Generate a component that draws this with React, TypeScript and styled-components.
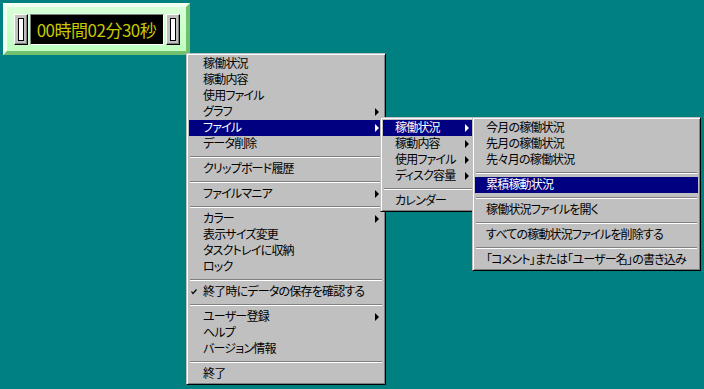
import React from "react";
import styled, { createGlobalStyle } from "styled-components";

type Entry =
	| { sep: true }
	| { label: string; sub?: boolean; active?: boolean; checked?: boolean };

const mainItems: Entry[] = [
	{ label: "稼働状況" },
	{ label: "稼動内容" },
	{ label: "使用ファイル" },
	{ label: "グラフ", sub: true },
	{ label: "ファイル", sub: true, active: true },
	{ label: "データ削除" },
	{ sep: true },
	{ label: "クリップボード履歴" },
	{ sep: true },
	{ label: "ファイルマニア", sub: true },
	{ sep: true },
	{ label: "カラー", sub: true },
	{ label: "表示サイズ変更" },
	{ label: "タスクトレイに収納" },
	{ label: "ロック" },
	{ sep: true },
	{ label: "終了時にデータの保存を確認する", checked: true },
	{ sep: true },
	{ label: "ユーザー登録", sub: true },
	{ label: "ヘルプ" },
	{ label: "バージョン情報" },
	{ sep: true },
	{ label: "終了" },
];

const fileItems: Entry[] = [
	{ label: "稼働状況", sub: true, active: true },
	{ label: "稼動内容", sub: true },
	{ label: "使用ファイル", sub: true },
	{ label: "ディスク容量", sub: true },
	{ sep: true },
	{ label: "カレンダー" },
];

const statusItems: Entry[] = [
	{ label: "今月の稼働状況" },
	{ label: "先月の稼働状況" },
	{ label: "先々月の稼働状況" },
	{ sep: true },
	{ label: "累積稼動状況", active: true },
	{ sep: true },
	{ label: "稼働状況ファイルを開く" },
	{ sep: true },
	{ label: "すべての稼動状況ファイルを削除する" },
	{ sep: true },
	{ label: "「コメント」または「ユーザー名」の書き込み" },
];

const Menu: React.FC<{
	items: Entry[];
	left: number;
	top: number;
	width: number;
	indent: number;
}> = ({ items, left, top, width, indent }) => (
	<MenuBox $left={left} $top={top} $width={width}>
		{items.map((it, i) =>
			"sep" in it ? (
				<Separator key={i} />
			) : (
				<Item key={i} $active={!!it.active} $indent={indent}>
					{it.checked && (
						<Check viewBox="0 0 6 6">
							<polyline
								points="0.5,2.5 2,4.5 5.5,0.5"
								fill="none"
								stroke="currentColor"
								strokeWidth="1.2"
							/>
						</Check>
					)}
					<span>{it.label}</span>
					{it.sub && <Arrow $active={!!it.active} />}
				</Item>
			)
		)}
	</MenuBox>
);

const App: React.FC = () => {
	return (
		<>
			<GlobalStyle />
			<Desktop>
				<Timer>
					<Knob>
						<Slot />
					</Knob>
					<Display>00時間02分30秒</Display>
					<Knob>
						<Slot />
					</Knob>
				</Timer>
				<Menu items={mainItems} left={186} top={53} width={200} indent={14} />
				<Menu items={fileItems} left={380} top={117} width={96} indent={12} />
				<Menu items={statusItems} left={472} top={117} width={229} indent={11} />
			</Desktop>
		</>
	);
};

export default App;

const GlobalStyle = createGlobalStyle`
	html, body {
		margin: 0;
		padding: 0;
		background: #008080;
		overflow: hidden;
	}
`;

const Desktop = styled.div`
	position: relative;
	width: 704px;
	height: 389px;
	background: #008080;
	padding: 3px 0 0 3px;
	box-sizing: border-box;
	font-family: "Noto Sans CJK JP", "DejaVu Sans", sans-serif;
	font-feature-settings: "palt";
`;

const Timer = styled.div`
	width: 187px;
	height: 52px;
	box-sizing: border-box;
	display: flex;
	align-items: center;
	justify-content: center;
	gap: 2px;
	background: linear-gradient(#d8ffd8, #c0ffc0);
	border: 4px solid;
	border-color: #f0fff0 #70c070 #70c070 #f0fff0;
`;

const Knob = styled.div`
	width: 14px;
	height: 31px;
	box-sizing: border-box;
	background: #c0c0c0;
	border: 1px solid;
	border-color: #fff #000 #000 #fff;
	box-shadow: inset -1px -1px #808080;
	display: flex;
	align-items: center;
	justify-content: center;
`;

const Slot = styled.div`
	width: 4px;
	height: 21px;
	background: #fff;
	border: 1px solid #000;
`;

const Display = styled.div`
	width: 134px;
	height: 31px;
	box-sizing: border-box;
	background: #000;
	border: 1px solid;
	border-color: #808080 #fff #fff #808080;
	color: #c8c800;
	font-size: 17px;
	line-height: 29px;
	text-align: center;
	white-space: nowrap;
	font-feature-settings: normal;
	letter-spacing: -0.5px;
`;

const MenuBox = styled.div<{ $left: number; $top: number; $width: number }>`
	position: absolute;
	left: ${(p) => p.$left}px;
	top: ${(p) => p.$top}px;
	width: ${(p) => p.$width}px;
	box-sizing: border-box;
	background: #c0c0c0;
	border: 1px solid;
	border-color: #c0c0c0 #000 #000 #c0c0c0;
	box-shadow: inset 1px 1px #fff, inset -1px -1px #808080;
	padding: 2px;
	font-size: 12px;
	letter-spacing: -0.8px;
	color: #000;
`;

const Item = styled.div<{ $active: boolean; $indent: number }>`
	position: relative;
	height: 16px;
	line-height: 14px;
	padding-left: ${(p) => p.$indent}px;
	white-space: nowrap;
	background: ${(p) => (p.$active ? "#000080" : "transparent")};
	color: ${(p) => (p.$active ? "#fff" : "#000")};
`;

const Check = styled.svg`
	position: absolute;
	left: 2px;
	top: 5px;
	width: 6px;
	height: 6px;
`;

const Arrow = styled.i<{ $active: boolean }>`
	position: absolute;
	right: 4px;
	top: 4px;
	width: 0;
	height: 0;
	border-top: 4px solid transparent;
	border-bottom: 4px solid transparent;
	border-left: 4px solid ${(p) => (p.$active ? "#fff" : "#000")};
`;

const Separator = styled.div`
	height: 9px;
	display: flex;
	flex-direction: column;
	justify-content: center;
	padding: 0 1px;

	&::before,
	&::after {
		content: "";
		display: block;
		height: 1px;
	}
	&::before {
		background: #808080;
	}
	&::after {
		background: #fff;
	}
`;
